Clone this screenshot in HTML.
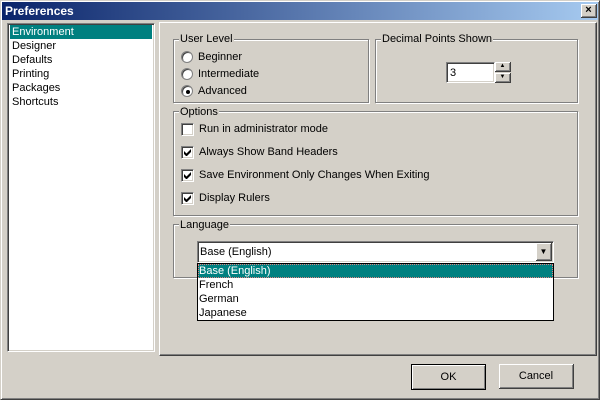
<!DOCTYPE html>
<html><head><style>
*{box-sizing:border-box;margin:0;padding:0}
body{width:600px;height:400px;background:#d4d0c8;font-family:"Liberation Sans",sans-serif;font-size:11px;color:#000;position:relative;overflow:hidden}
.a{position:absolute}
.win{left:0;top:0;width:600px;height:400px;border-top:1px solid #d4d0c8;border-left:1px solid #d4d0c8;border-right:1px solid #404040;border-bottom:1px solid #404040;box-shadow:inset 1px 1px #fff,inset -1px -1px #808080}
.title{left:2px;top:2px;width:596px;height:18px;background:linear-gradient(to right,#0a246a,#a6caf0);color:#fff;font-weight:bold;font-size:12px;line-height:18px;padding-left:3px}
.close{left:581px;top:4px;width:16px;height:14px;background:#d4d0c8;border-right:1px solid #404040;border-bottom:1px solid #404040;box-shadow:inset 1px 1px #fff,inset -1px -1px #808080;font-size:11px;line-height:12px;text-align:center;color:#000;font-weight:bold}
.sunk{border-top:1px solid #808080;border-left:1px solid #808080;border-right:1px solid #fff;border-bottom:1px solid #fff;box-shadow:inset 1px 1px #404040,inset -1px -1px #d4d0c8}
.list{left:7px;top:23px;width:148px;height:329px;background:#fff}
.li{position:absolute;left:2px;width:142px;height:14px;line-height:15px;padding-left:2px;font-size:11px}
.panel{left:159px;top:22px;width:438px;height:334px;border-top:1px solid #fff;border-left:1px solid #fff;border-right:1px solid #404040;border-bottom:1px solid #404040;box-shadow:inset -1px -1px #808080}
.grp{border:1px solid #808080;box-shadow:1px 1px #fff,inset 1px 1px #fff}
.lbl{background:#d4d0c8;padding:0 1px;line-height:13px}
.t{line-height:13px}
.rad{width:12px;height:12px;border-radius:50%;background:#fff;border:1px solid #808080;box-shadow:inset 1px 1px #404040}
.chk{width:13px;height:13px;background:#fff;border-top:1px solid #808080;border-left:1px solid #808080;border-right:1px solid #fff;border-bottom:1px solid #fff;box-shadow:inset 1px 1px #404040,inset -1px -1px #d4d0c8}
.btn{background:#d4d0c8;border-right:1px solid #404040;border-bottom:1px solid #404040;box-shadow:inset 1px 1px #fff,inset -1px -1px #808080;text-align:center}
.ck{position:absolute;left:2px;top:2px}
</style></head><body>
<div class="a win"></div>
<div class="a title">Preferences</div>
<div class="a close">×</div>

<div class="a list sunk">
<div class="li" style="top:1px;background:#008080;color:#fff">Environment</div>
<div class="li" style="top:15px">Designer</div>
<div class="li" style="top:29px">Defaults</div>
<div class="li" style="top:43px">Printing</div>
<div class="li" style="top:57px">Packages</div>
<div class="li" style="top:71px">Shortcuts</div>
</div>

<div class="a panel"></div>

<div class="a grp" style="left:173px;top:39px;width:196px;height:64px"></div>
<div class="a lbl" style="left:179px;top:33px">User Level</div>
<div class="a rad" style="left:181px;top:51px"></div><div class="a t" style="left:198px;top:51px">Beginner</div>
<div class="a rad" style="left:181px;top:68px"></div><div class="a t" style="left:198px;top:68px">Intermediate</div>
<div class="a rad" style="left:181px;top:85px"></div><div class="a" style="left:186px;top:90px;width:4px;height:4px;background:#000;border-radius:50%"></div><div class="a t" style="left:198px;top:85px">Advanced</div>

<div class="a grp" style="left:375px;top:39px;width:203px;height:64px"></div>
<div class="a lbl" style="left:381px;top:33px">Decimal Points Shown</div>
<div class="a sunk" style="left:446px;top:62px;width:49px;height:21px;background:#fff;padding:3px 3px;line-height:14px">3</div>
<div class="a btn" style="left:495px;top:62px;width:16px;height:10px;font-size:6px;line-height:9px">▲</div>
<div class="a btn" style="left:495px;top:73px;width:16px;height:10px;font-size:6px;line-height:9px">▼</div>

<div class="a grp" style="left:173px;top:111px;width:405px;height:105px"></div>
<div class="a lbl" style="left:179px;top:106px">Options</div>
<div class="a chk" style="left:181px;top:123px"></div><div class="a t" style="left:199px;top:123px">Run in administrator mode</div>
<div class="a chk" style="left:181px;top:146px"><svg class="ck" width="7" height="7" viewBox="0 0 7 7"><path d="M0 2v3l2 2h1l4-4V0L2.5 4.5z" fill="#000"/></svg></div><div class="a t" style="left:199px;top:146px">Always Show Band Headers</div>
<div class="a chk" style="left:181px;top:169px"><svg class="ck" width="7" height="7" viewBox="0 0 7 7"><path d="M0 2v3l2 2h1l4-4V0L2.5 4.5z" fill="#000"/></svg></div><div class="a t" style="left:199px;top:169px">Save Environment Only Changes When Exiting</div>
<div class="a chk" style="left:181px;top:192px"><svg class="ck" width="7" height="7" viewBox="0 0 7 7"><path d="M0 2v3l2 2h1l4-4V0L2.5 4.5z" fill="#000"/></svg></div><div class="a t" style="left:199px;top:192px">Display Rulers</div>

<div class="a grp" style="left:173px;top:224px;width:405px;height:54px"></div>
<div class="a lbl" style="left:179px;top:219px">Language</div>
<div class="a sunk" style="left:197px;top:241px;width:357px;height:22px;background:#fff;padding:4px 2px;line-height:13px">Base (English)</div>
<div class="a btn" style="left:536px;top:243px;width:16px;height:18px;font-size:8px;line-height:17px">▼</div>

<div class="a" style="left:197px;top:263px;width:357px;height:58px;background:#fff;border:1px solid #000">
<div style="height:14px;background:#008080;color:#fff;line-height:14px;padding-left:1px;outline:1px dotted #e08080;outline-offset:-1px">Base (English)</div>
<div style="height:14px;line-height:14px;padding-left:1px">French</div>
<div style="height:14px;line-height:14px;padding-left:1px">German</div>
<div style="height:14px;line-height:14px;padding-left:1px">Japanese</div>
</div>

<div class="a btn" style="left:411px;top:364px;width:75px;height:26px;border:1px solid #000;line-height:24px">OK</div>
<div class="a btn" style="left:499px;top:364px;width:75px;height:25px;line-height:24px">Cancel</div>
</body></html>
